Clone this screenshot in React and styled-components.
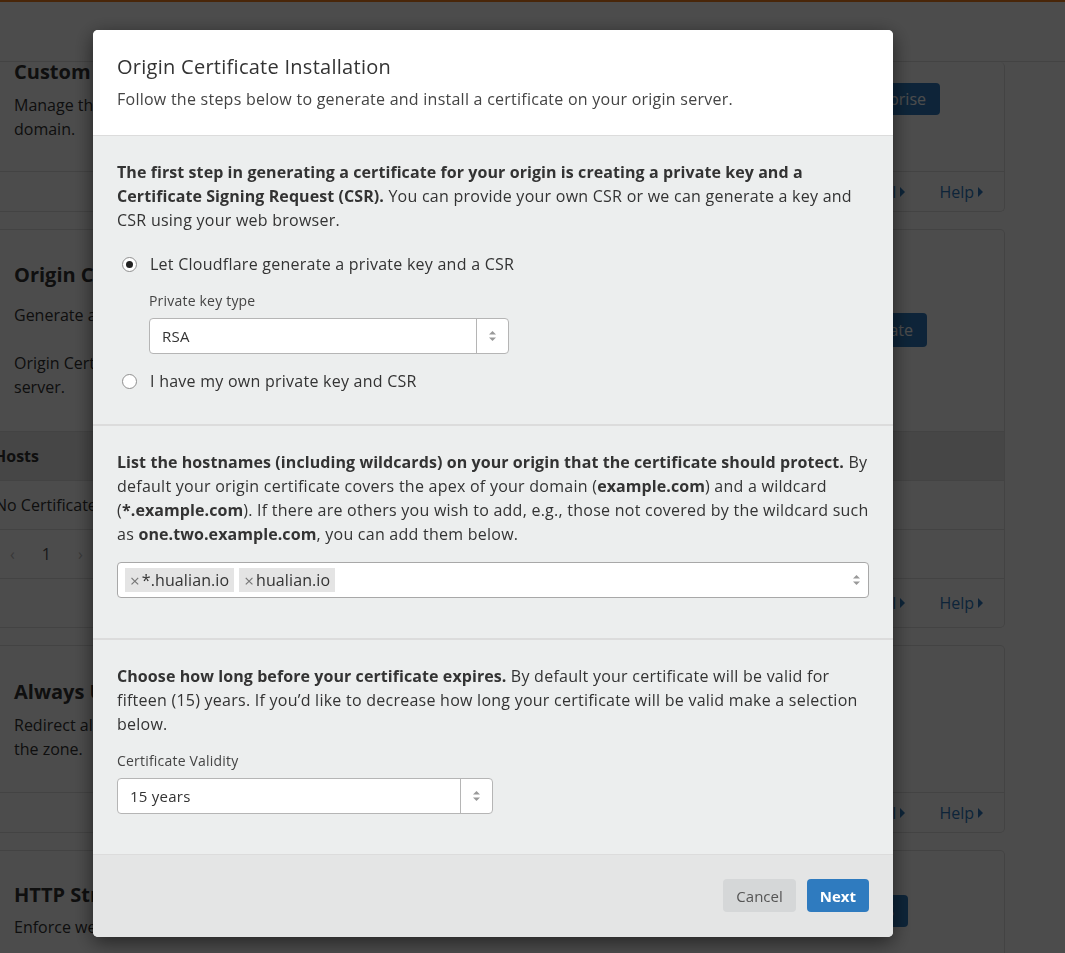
import React from "react";
import styled, { createGlobalStyle } from "styled-components";

const GlobalStyle = createGlobalStyle`
  html, body {
    margin: 0;
    padding: 0;
    background: #ffffff;
    font-family: "Open Sans", "Noto Sans", sans-serif;
    color: #333;
    overflow: hidden;
  }
  * { box-sizing: border-box; }
`;

// ---------------- background page ----------------

const Page = styled.div`
  width: 1065px;
  height: 953px;
  overflow: hidden;
  border-top: 2px solid #f38020;
`;

const Header = styled.div`
  height: 60px;
  border-bottom: 1px solid #e0e0e0;
`;

const Cards = styled.div`
  display: flex;
  flex-direction: column;
  gap: 17px;
  width: 1005px;
`;

const Card = styled.section`
  border: 1px solid #e0e0e0;
  border-left: none;
  border-top: ${({ $cut }) => ($cut ? "none" : "1px solid #e0e0e0")};
  border-radius: 0 5px 5px 0;
  background: #fff;
`;

const CardBody = styled.div`
  display: grid;
  grid-template-columns: 697px 1fr;
  padding-top: ${({ $top }) => $top}px;
  min-height: ${({ $h }) => $h}px;
`;

const CardText = styled.div`
  padding-left: 14px;
  padding-right: 20px;
`;

const CardTitle = styled.h3`
  margin: ${({ $mt }) => $mt || 0}px 0 ${({ $mb }) => $mb || 8}px;
  font-size: 20px;
  line-height: 26px;
  font-weight: 700;
  color: #333;
`;

const CardPara = styled.p`
  margin: 0 0 24px;
  font-size: 16px;
  line-height: 24px;
`;

const CardAside = styled.div`
  display: flex;
  justify-content: flex-end;
  align-items: flex-start;
  padding-right: ${({ $right }) => $right}px;
  padding-top: ${({ $top }) => $top || 0}px;
`;

const DarkButton = styled.button`
  border: none;
  border-radius: 4px;
  background: #2f7bbf;
  color: #fff;
  font-family: inherit;
  font-size: 16px;
  height: ${({ $h }) => $h || 32}px;
  padding: 0 14px;
`;

const CardFooter = styled.div`
  border-top: 1px solid #e0e0e0;
  height: ${({ $h }) => $h || 40}px;
  display: flex;
  justify-content: flex-end;
  align-items: center;
  gap: 34px;
  padding-right: 21px;
  font-size: 16px;
  color: #2f7bbf;
`;

const FooterLink = styled.span`
  display: inline-flex;
  align-items: center;
  gap: 4px;
  &::after {
    content: "";
    border-left: 5px solid #2f7bbf;
    border-top: 5px solid transparent;
    border-bottom: 5px solid transparent;
  }
`;

const TableRow = styled.div`
  height: ${({ $h }) => $h || 49}px;
  border-top: 1px solid #e0e0e0;
  display: flex;
  align-items: center;
  gap: 27px;
  padding-left: 10px;
  font-size: 16px;
  font-weight: ${({ $head }) => ($head ? 700 : 400)};
  background: ${({ $head }) => ($head ? "#ececec" : "transparent")};
`;

const CutText = styled.span`
  margin-left: ${({ $shift }) => $shift}px;
`;

const Pager = styled.span`
  color: ${({ $muted }) => ($muted ? "#bbb" : "#555")};
`;

// ---------------- modal ----------------

const Overlay = styled.div`
  position: fixed;
  inset: 0;
  background: rgba(0, 0, 0, 0.7);
  padding: 30px 0 0 93px;
`;

const Modal = styled.div`
  width: 800px;
  border-radius: 5px;
  overflow: hidden;
  box-shadow: 0 5px 20px rgba(0, 0, 0, 0.55);
  background: #eceeee;
  letter-spacing: 0.25px;
  & b {
    font-weight: 700;
    letter-spacing: 0.08px;
  }
`;

const ModalHeader = styled.div`
  background: #fff;
  padding: 23px 24px 24px;
  border-bottom: 1px solid #dcdcdc;
`;

const ModalTitle = styled.h2`
  margin: 0;
  font-size: 20px;
  line-height: 28px;
  font-weight: 400;
  letter-spacing: 0.27px;
  color: #333;
`;

const ModalSub = styled.p`
  margin: 6px 0 0;
  font-size: 16px;
  line-height: 24px;
  color: #444;
`;

const Step = styled.div`
  padding: 24px 24px ${({ $bottom }) => $bottom}px;
  border-bottom: ${({ $last }) => ($last ? "1px solid #dcdcdc" : "2px solid #dcdcdc")};
`;

const StepText = styled.p`
  margin: 0;
  font-size: 16px;
  line-height: 24px;
  color: #333;
`;

const RadioRow = styled.label`
  display: flex;
  align-items: center;
  gap: 13px;
  height: 24px;
  margin-top: ${({ $mt }) => $mt}px;
  padding-left: 5px;
  font-size: 16px;
  color: #333;
`;

const RadioDot = styled.span`
  width: 15px;
  height: 15px;
  border-radius: 50%;
  border: 1px solid #8f8f8f;
  background: #fff;
  display: flex;
  align-items: center;
  justify-content: center;
  &::after {
    content: "";
    width: 7px;
    height: 7px;
    border-radius: 50%;
    background: ${({ $on }) => ($on ? "#222" : "transparent")};
  }
`;

const Indent = styled.div`
  padding-left: 32px;
`;

const FieldLabel = styled.div`
  margin-top: 15px;
  font-size: 14px;
  line-height: 20px;
  letter-spacing: 0.2px;
  color: #444;
`;

const SelectBox = styled.div`
  margin-top: 7px;
  width: ${({ $w }) => $w}px;
  height: 36px;
  background: #fff;
  border: 1px solid #b5b5b5;
  border-radius: 4px;
  display: flex;
  align-items: stretch;
  font-size: 15px;
  color: #333;
`;

const SelectValue = styled.div`
  flex: 1;
  display: flex;
  align-items: center;
  padding-left: 12px;
`;

const SelectArrow = styled.div`
  width: 32px;
  border-left: 1px solid #b5b5b5;
  display: flex;
  align-items: center;
  justify-content: center;
`;

const TagInput = styled.div`
  margin-top: 16px;
  height: 36px;
  background: #fff;
  border: 1px solid #a8a8a8;
  border-radius: 4px;
  display: flex;
  align-items: center;
  gap: 5px;
  padding: 0 7px;
`;

const Tag = styled.span`
  height: 24px;
  display: inline-flex;
  align-items: center;
  gap: 2px;
  padding: 0 5px;
  background: #e4e4e4;
  font-size: 16px;
  color: #333;
  letter-spacing: 0.1px;
`;

const TagRemove = styled.span`
  font-size: 17px;
  line-height: 1;
  color: #777;
`;

const TagSpacer = styled.div`
  flex: 1;
`;

const ModalFooter = styled.div`
  background: #e4e5e5;
  padding: 24px 24px 25px;
  display: flex;
  justify-content: flex-end;
  gap: 11px;
`;

const Button = styled.button`
  height: 33px;
  border: none;
  border-radius: 4px;
  padding: 0 13px;
  font-family: inherit;
  font-size: 15px;
  letter-spacing: 0;
  background: ${({ $primary }) => ($primary ? "#2f7bbf" : "#d5d7d8")};
  color: ${({ $primary }) => ($primary ? "#fff" : "#555")};
  font-weight: ${({ $primary }) => ($primary ? 700 : 400)};
`;

const Updown = () => (
  <svg width="9" height="12" viewBox="0 0 9 12">
    <path d="M4.5 1 L8 4.5 L1 4.5 Z" fill="#999" />
    <path d="M4.5 11 L8 7.5 L1 7.5 Z" fill="#999" />
  </svg>
);

const Select = ({ value, width }) => (
  <SelectBox $w={width}>
    <SelectValue>{value}</SelectValue>
    <SelectArrow>
      <Updown />
    </SelectArrow>
  </SelectBox>
);

const App = () => {
  return (
    <>
      <GlobalStyle />
      <Page>
        <Header />
        <Cards>
          <Card $cut>
            <CardBody $top={0} $h={109}>
              <CardText>
                <CardTitle $mt={-3}>Custom Hostnames</CardTitle>
                <CardPara>
                  Manage the custom hostnames that point to your
                  <br />
                  domain.
                </CardPara>
              </CardText>
              <CardAside $right={64} $top={21}>
                <DarkButton>Upgrade to Enterprise</DarkButton>
              </CardAside>
            </CardBody>
            <CardFooter>
              <FooterLink>API</FooterLink>
              <FooterLink>Help</FooterLink>
            </CardFooter>
          </Card>

          <Card>
            <CardBody $top={32} $h={201}>
              <CardText>
                <CardTitle $mb={15}>Origin Certificates</CardTitle>
                <CardPara>Generate a free TLS certificate signed by Cloudflare.</CardPara>
                <CardPara>
                  Origin Certificates are only valid for encryption between Cloudflare and your origin
                  <br />
                  server.
                </CardPara>
              </CardText>
              <CardAside $right={77} $top={51}>
                <DarkButton $h={34}>Create Certificate</DarkButton>
              </CardAside>
            </CardBody>
            <TableRow $head>
              <CutText $shift={-16}>Hosts</CutText>
            </TableRow>
            <TableRow>
              <CutText $shift={-15}>No Certificates</CutText>
            </TableRow>
            <TableRow>
              <Pager $muted>‹</Pager>
              <Pager>1</Pager>
              <Pager $muted>›</Pager>
            </TableRow>
            <CardFooter $h={49}>
              <FooterLink>API</FooterLink>
              <FooterLink>Help</FooterLink>
            </CardFooter>
          </Card>

          <Card>
            <CardBody $top={33} $h={146}>
              <CardText>
                <CardTitle>Always Use HTTPS</CardTitle>
                <CardPara>
                  Redirect all requests with scheme “http” to “https”. This applies to all http requests to
                  <br />
                  the zone.
                </CardPara>
              </CardText>
              <CardAside $right={112} $top={37} />
            </CardBody>
            <CardFooter>
              <FooterLink>API</FooterLink>
              <FooterLink>Help</FooterLink>
            </CardFooter>
          </Card>

          <Card>
            <CardBody $top={31} $h={120}>
              <CardText>
                <CardTitle $mb={7}>HTTP Strict Transport Security (HSTS)</CardTitle>
                <CardPara>Enforce web security policy for your website.</CardPara>
              </CardText>
              <CardAside $right={96} $top={13}>
                <DarkButton>Enable HSTS</DarkButton>
              </CardAside>
            </CardBody>
          </Card>
        </Cards>
      </Page>

      <Overlay>
        <Modal>
          <ModalHeader>
            <ModalTitle>Origin Certificate Installation</ModalTitle>
            <ModalSub>Follow the steps below to generate and install a certificate on your origin server.</ModalSub>
          </ModalHeader>

          <Step $bottom={31}>
            <StepText>
              <b>
                The first step in generating a certificate for your origin is creating a private key and a
                Certificate Signing Request (CSR).
              </b>{" "}
              You can provide your own CSR or we can generate a key and CSR using your web browser.
            </StepText>
            <RadioRow $mt={20}>
              <RadioDot $on />
              Let Cloudflare generate a private key and a CSR
            </RadioRow>
            <Indent>
              <FieldLabel>Private key type</FieldLabel>
              <Select value="RSA" width={360} />
            </Indent>
            <RadioRow $mt={15}>
              <RadioDot />I have my own private key and CSR
            </RadioRow>
          </Step>

          <Step $bottom={40}>
            <StepText>
              <b>List the hostnames (including wildcards) on your origin that the certificate should protect.</b>{" "}
              By default your origin certificate covers the apex of your domain (<b>example.com</b>) and a
              wildcard (<b>*.example.com</b>). If there are others you wish to add, e.g., those not covered by the
              wildcard such as <b>one.two.example.com</b>, you can add them below.
            </StepText>
            <TagInput>
              <Tag>
                <TagRemove>×</TagRemove>*.hualian.io
              </Tag>
              <Tag>
                <TagRemove>×</TagRemove>hualian.io
              </Tag>
              <TagSpacer />
              <Updown />
            </TagInput>
          </Step>

          <Step $bottom={40} $last>
            <StepText>
              <b>Choose how long before your certificate expires.</b> By default your certificate will be valid
              for fifteen (15) years. If you’d like to decrease how long your certificate will be valid make a
              selection below.
            </StepText>
            <FieldLabel>Certificate Validity</FieldLabel>
            <Select value="15 years" width={376} />
          </Step>

          <ModalFooter>
            <Button>Cancel</Button>
            <Button $primary>Next</Button>
          </ModalFooter>
        </Modal>
      </Overlay>
    </>
  );
};

export default App;
